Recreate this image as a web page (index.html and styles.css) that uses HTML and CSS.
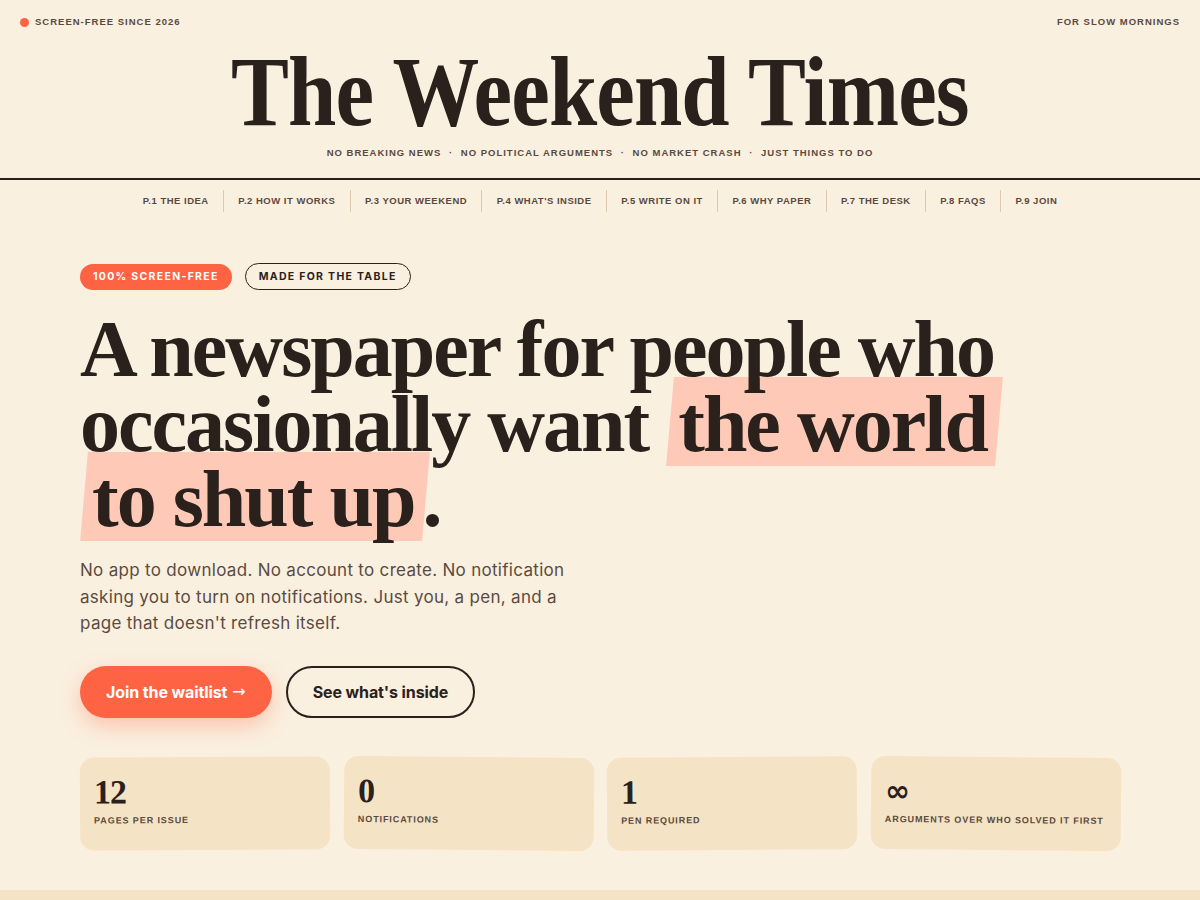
FILE: index.html
```html
<!DOCTYPE html>
<html lang="en">
<head>
<meta charset="utf-8">
<title>The Weekend Times</title>
<link rel="stylesheet" href="styles.css">
</head>
<body>
<header class="masthead">
  <div class="topbar">
    <span class="topbar-left"><span class="dot"></span>SCREEN-FREE SINCE 2026</span>
    <span class="topbar-right">FOR SLOW MORNINGS</span>
  </div>
  <h1 class="title"><span class="title-inner">The Weekend Times</span></h1>
  <p class="tagline">NO BREAKING NEWS <span class="sep">·</span> NO POLITICAL ARGUMENTS <span class="sep">·</span> NO MARKET CRASH <span class="sep">·</span> JUST THINGS TO DO</p>
</header>
<nav class="nav">
  <a class="nav-item">P.1 THE IDEA</a>
  <a class="nav-item">P.2 HOW IT WORKS</a>
  <a class="nav-item">P.3 YOUR WEEKEND</a>
  <a class="nav-item">P.4 WHAT'S INSIDE</a>
  <a class="nav-item">P.5 WRITE ON IT</a>
  <a class="nav-item">P.6 WHY PAPER</a>
  <a class="nav-item">P.7 THE DESK</a>
  <a class="nav-item">P.8 FAQS</a>
  <a class="nav-item">P.9 JOIN</a>
</nav>
<main class="hero">
  <div class="container">
    <div class="badges">
      <span class="badge badge-solid">100% SCREEN-FREE</span>
      <span class="badge badge-outline">MADE FOR THE TABLE</span>
    </div>
    <h2 class="headline">A newspaper for people who<br>occasionally want <span class="hl">the world</span><br><span class="hl">to shut up</span>.</h2>
    <p class="lede">No app to download. No account to create. No notification asking you to turn on notifications. Just you, a pen, and a page that doesn't refresh itself.</p>
    <div class="actions">
      <a class="btn btn-primary">Join the waitlist <span class="arrow">→</span></a>
      <a class="btn btn-outline">See what's inside</a>
    </div>
    <div class="stats">
      <div class="stat stat-1"><div class="stat-num">12</div><div class="stat-label">PAGES PER ISSUE</div></div>
      <div class="stat stat-2"><div class="stat-num">0</div><div class="stat-label">NOTIFICATIONS</div></div>
      <div class="stat stat-3"><div class="stat-num">1</div><div class="stat-label">PEN REQUIRED</div></div>
      <div class="stat stat-4"><div class="stat-num stat-inf">∞</div><div class="stat-label">ARGUMENTS OVER WHO SOLVED IT FIRST</div></div>
    </div>
  </div>
</main>
<section class="next"></section>
</body>
</html>
```

FILE: styles.css
```css
* { box-sizing: border-box; }
html, body { margin: 0; padding: 0; }
body {
  background: #faf0e0;
  color: #2a211c;
  font-family: "Inter", "Liberation Sans", sans-serif;
}
a { text-decoration: none; color: inherit; }

.masthead {
  border-bottom: 2px solid #2a211c;
  text-align: center;
}
.topbar {
  display: flex;
  justify-content: space-between;
  align-items: center;
  padding: 16px 20px 12px;
  font-family: "Liberation Sans", Arial, sans-serif;
  font-weight: 700;
  font-size: 9.5px;
  line-height: 12px;
  letter-spacing: 1px;
  color: #5a4a3e;
}
.topbar-left { display: flex; align-items: center; gap: 6px; }
.dot {
  width: 9px; height: 9px; border-radius: 50%;
  background: #fe6443;
  display: inline-block;
}
.title {
  margin: 0;
  font-family: "Liberation Serif", "Times New Roman", serif;
  font-weight: 700;
  font-size: 100px;
  line-height: 104px;
  letter-spacing: -1px;
  color: #2a211c;
}
.title-inner {
  display: inline-block;
  transform: scaleX(0.868);
}
.tagline {
  margin: 2px 0 18px;
  font-family: "Liberation Sans", Arial, sans-serif;
  font-weight: 700;
  font-size: 9.5px;
  line-height: 14px;
  letter-spacing: 1px;
  color: #5a4a3e;
}
.tagline .sep { margin: 0 4px; }

.nav {
  display: flex;
  justify-content: center;
  padding: 10px 0 10px;
}
.nav-item {
  font-family: "Liberation Sans", Arial, sans-serif;
  font-weight: 700;
  font-size: 9.5px;
  letter-spacing: 0.5px;
  line-height: 22px;
  color: #5a4a3e;
  padding: 0 14.3px;
  border-left: 1px solid #dccab0;
}
.nav-item:first-child { border-left: none; }

.container {
  width: 1040px;
  margin: 0 auto;
}
.hero { padding-top: 41px; padding-bottom: 40px; }

.badges { display: flex; align-items: center; gap: 13px; }
.badge {
  font-family: "Inter", sans-serif;
  font-weight: 700;
  font-size: 10.5px;
  letter-spacing: 1.3px;
  border-radius: 999px;
}
.badge-solid {
  background: #fe6443;
  color: #fff;
  line-height: 26px;
  padding: 0 13px;
}
.badge-outline {
  border: 1.5px solid #2a211c;
  color: #2a211c;
  line-height: 25px;
  padding: 0 13px;
}

.headline {
  position: relative;
  z-index: 0;
  margin: 22px 0 0;
  font-family: "Liberation Serif", "Times New Roman", serif;
  font-weight: 700;
  font-size: 80px;
  line-height: 75px;
  letter-spacing: -2px;
  color: #2a211c;
}
.hl {
  position: relative;
  display: inline-block;
  padding: 0 8px 0 12px;
}
.hl::before {
  content: "";
  position: absolute;
  top: -10px;
  bottom: -4px;
  left: 4px;
  right: -4px;
  background: #fec9b7;
  transform: skewX(-5deg);
  z-index: -1;
}

.lede {
  margin: 20px 0 0;
  width: 510px;
  font-family: "Inter", sans-serif;
  font-size: 17px;
  line-height: 26.5px;
  letter-spacing: 0.3px;
  color: #5b4b3f;
}

.actions {
  display: flex;
  gap: 14px;
  margin-top: 29px;
}
.btn {
  display: inline-flex;
  align-items: center;
  height: 52px;
  border-radius: 999px;
  font-family: "Inter", sans-serif;
  font-weight: 700;
  font-size: 16px;
  letter-spacing: -0.1px;
}
.arrow {
  font-family: "DejaVu Sans", sans-serif;
  font-weight: 400;
  margin-left: 5px;
}
.btn-primary {
  background: #fe6443;
  color: #fff;
  padding: 0 26px;
  box-shadow: 0 8px 22px rgba(254, 100, 67, 0.32);
}
.btn-outline {
  border: 2px solid #2a211c;
  color: #2a211c;
  padding: 0 25px;
}

.stats {
  display: grid;
  grid-template-columns: repeat(4, 1fr);
  gap: 14px;
  margin-top: 39px;
}
.stat {
  background: #f5e3c5;
  border-radius: 14px;
  height: 93px;
  padding: 18px 14px;
}
.stat-1 { transform: rotate(-0.3deg); }
.stat-2 { transform: rotate(0.5deg); }
.stat-3 { transform: rotate(-0.4deg); }
.stat-4 { transform: rotate(0.5deg); }
.stat-num {
  font-family: "Liberation Serif", "Times New Roman", serif;
  font-weight: 700;
  font-size: 34px;
  line-height: 34px;
  letter-spacing: -1px;
  color: #2a211c;
}
.stat-inf { font-family: "DejaVu Sans", sans-serif; font-size: 30px; }
.stat-label {
  margin-top: 6px;
  font-family: "Liberation Sans", Arial, sans-serif;
  font-weight: 700;
  font-size: 9px;
  letter-spacing: 0.9px;
  color: #5a4a3e;
}

.next {
  background: #f5e3c5;
  height: 200px;
}
```
